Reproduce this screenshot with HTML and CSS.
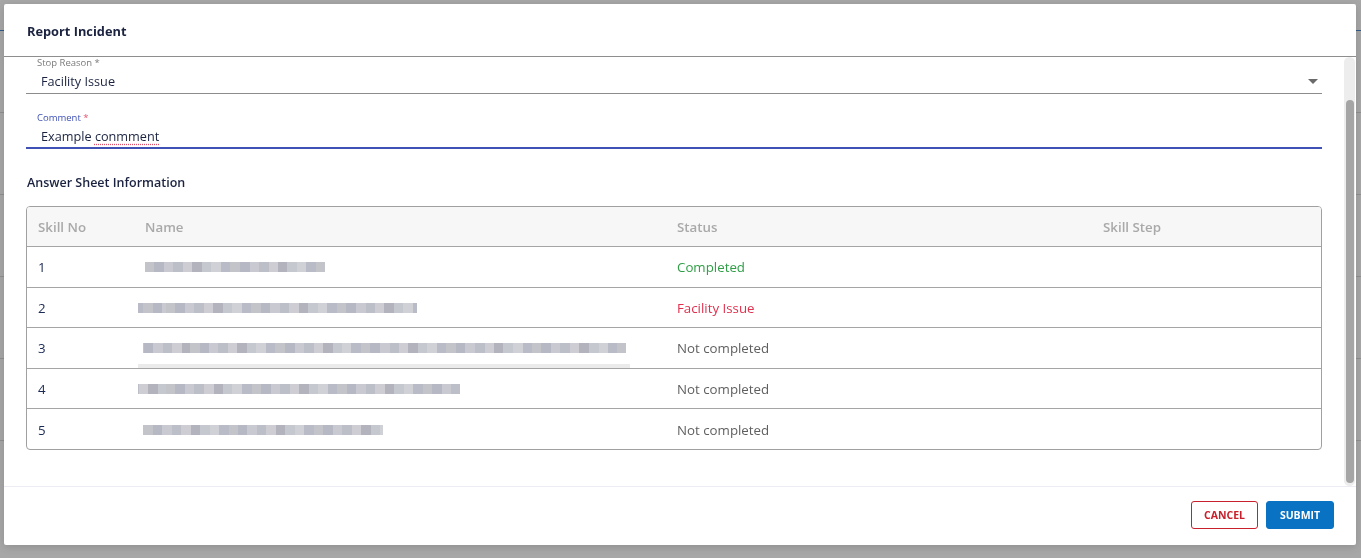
FILE: index.html
```html
<!DOCTYPE html>
<html lang="en">
<head>
    <meta charset="UTF-8">
    <meta name="viewport" content="width=device-width, initial-scale=1.0">
    <title>Report Incident</title>
    <link rel="stylesheet" href="styles.css">
</head>
<body>
    <!-- page behind the dialog -->
    <div class="page">
        <div class="page-bar"></div>
        <div class="page-row"></div>
        <div class="page-row"></div>
        <div class="page-row"></div>
        <div class="page-row"></div>
        <div class="page-row"></div>
    </div>

    <div class="backdrop">
        <div class="dialog">
            <div class="dialog-header">
                <h2>Report Incident</h2>
            </div>

            <div class="dialog-body">
                <div class="dialog-content">
                    <div class="field">
                        <label>Stop Reason *</label>
                        <div class="field-value">
                            <span>Facility Issue</span>
                            <span class="caret"></span>
                        </div>
                    </div>

                    <div class="field focused">
                        <label>Comment <span class="req">*</span></label>
                        <div class="field-value">
                            <span>Example <span class="misspelt">conmment</span></span>
                        </div>
                    </div>

                    <h3>Answer Sheet Information</h3>

                    <div class="sheet">
                        <div class="sheet-row sheet-head">
                            <div>Skill No</div>
                            <div>Name</div>
                            <div>Status</div>
                            <div>Skill Step</div>
                        </div>
                        <div class="sheet-row">
                            <div class="num">1</div>
                            <div><span class="hidden-name v1" style="width: 180px; margin-left: 0"></span></div>
                            <div class="status done">Completed</div>
                            <div></div>
                        </div>
                        <div class="sheet-row">
                            <div class="num">2</div>
                            <div><span class="hidden-name v2" style="width: 279px; margin-left: -7px"></span></div>
                            <div class="status issue">Facility Issue</div>
                            <div></div>
                        </div>
                        <div class="sheet-row">
                            <div class="num">3</div>
                            <div class="marked"><span class="hidden-name v3" style="width: 483px; margin-left: -2px"></span></div>
                            <div class="status">Not completed</div>
                            <div></div>
                        </div>
                        <div class="sheet-row">
                            <div class="num">4</div>
                            <div><span class="hidden-name v2" style="width: 322px; margin-left: -7px"></span></div>
                            <div class="status">Not completed</div>
                            <div></div>
                        </div>
                        <div class="sheet-row">
                            <div class="num">5</div>
                            <div><span class="hidden-name v1" style="width: 240px; margin-left: -2px"></span></div>
                            <div class="status">Not completed</div>
                            <div></div>
                        </div>
                    </div>
                </div>

                <div class="scroll-track">
                    <div class="scroll-thumb"></div>
                </div>
            </div>

            <div class="dialog-footer">
                <button class="btn btn-cancel">CANCEL</button>
                <button class="btn btn-submit">SUBMIT</button>
            </div>
        </div>
    </div>
</body>
</html>
```

FILE: styles.css
```css
* {
    box-sizing: border-box;
}
body {
    margin: 0;
    font-family: "Open Sans", "Noto Sans", Arial, sans-serif;
    color: #1b2340;
    background-color: #fff;
    height: 558px;
    overflow: hidden;
}

/* dimmed page underneath */
.page {
    height: 100%;
}
.page-bar {
    height: 31px;
    border-bottom: 1px solid #1565c0;
}
.page-row {
    height: 82px;
    border-bottom: 1px solid #d0d0d0;
}
.page-row:first-of-type {
    height: 81px;
}

.backdrop {
    position: fixed;
    inset: 0;
    background: rgba(80, 80, 80, 0.5);
    padding: 4px 5px 13px 4px;
}
.dialog {
    height: 100%;
    background: #fff;
    border-radius: 2px;
    display: flex;
    flex-direction: column;
    box-shadow: 0 2px 8px rgba(0, 0, 0, 0.15);
}

.dialog-header {
    height: 53px;
    padding: 0 23px;
    display: flex;
    align-items: center;
    border-bottom: 1px solid #8e8e8e;
    flex-shrink: 0;
}
.dialog-header h2 {
    margin: 0;
    font-size: 12.8px;
    font-weight: 700;
    color: #1b2340;
    padding-top: 2px;
}

.dialog-body {
    flex: 1;
    display: flex;
    min-height: 0;
}
.dialog-content {
    flex: 1;
    padding: 0 22px 0 22px;
}

.field {
    border-bottom: 1px solid #8c8c8c;
    padding-bottom: 2px;
}
.field label {
    display: block;
    height: 12px;
    line-height: 12px;
    font-size: 9.5px;
    color: #7a7a7a;
    padding-left: 11px;
}
.field-value {
    display: flex;
    align-items: center;
    justify-content: space-between;
    height: 20px;
    margin-top: 2px;
    padding-left: 15px;
    padding-right: 4px;
    font-size: 12.7px;
    color: #1b2340;
}
.caret {
    width: 0;
    height: 0;
    border-left: 5px solid transparent;
    border-right: 5px solid transparent;
    border-top: 5px solid #6a6a6a;
}
.field.focused {
    margin-top: 18px;
    border-bottom: 2px solid #3f51b5;
    padding-bottom: 1px;
}
.field.focused label {
    color: #3f51b5;
}
.req {
    color: #e5546e;
}
.misspelt {
    text-decoration: underline dotted #e0506a;
    text-underline-offset: 3px;
}

h3 {
    margin: 25px 0 0 1px;
    height: 18px;
    line-height: 18px;
    font-size: 12.5px;
    font-weight: 600;
    color: #1b2340;
}

/* answer sheet table */
.sheet {
    margin-top: 14px;
    border: 1px solid #a0a0a0;
    border-radius: 4px;
    overflow: hidden;
}
.sheet-row {
    display: grid;
    grid-template-columns: 106px 532px 426px 1fr;
    align-items: center;
    height: 40.6px;
    border-bottom: 1px solid #a5a5a5;
    font-size: 13.3px;
    padding-top: 1px;
}
.sheet-row:last-child {
    border-bottom: none;
    height: 39.6px;
}
.sheet-row > div {
    padding-left: 12px;
}
.sheet-row > div:first-child {
    padding-left: 11px;
}
.sheet-head {
    height: 40px;
    background: #f7f7f7;
    color: #a9a9a9;
    font-weight: 600;
    padding-top: 0;
}
.num {
    color: #1b2a55;
}
.status {
    color: #5f5f5f;
}
.status.done {
    color: #2e9e45;
}
.status.issue {
    color: #e0304e;
}

/* names are pixelated out */
.hidden-name {
    display: block;
    height: 10px;
    background: repeating-linear-gradient(90deg,
        #c3c3ca 0 9.5px, #b6b8c3 9.5px 19px, #c9cad1 19px 28.5px,
        #bcbec8 28.5px 38px, #cdcdd3 38px 47.5px, #b3b3bd 47.5px 57px,
        #c6c8cf 57px 66.5px, #d0d1d6 66.5px 76px, #b9bbc6 76px 85.5px);
}
.hidden-name.v2 {
    background-position: 28px 0;
}
.hidden-name.v3 {
    background-position: 47px 0;
}
.marked {
    position: relative;
    align-self: stretch;
    display: flex;
    align-items: center;
}
.marked::after {
    content: "";
    position: absolute;
    left: 5px;
    width: 492px;
    bottom: 0;
    height: 4px;
    background: #ebebeb;
}

.scroll-track {
    width: 11px;
    margin-right: 1px;
    background: #ededed;
    border-radius: 6px;
    padding: 43px 1px 3px 1.5px;
}
.scroll-thumb {
    height: 100%;
    background: #a5a5a5;
    border-radius: 5px;
}

.dialog-footer {
    height: 59px;
    flex-shrink: 0;
    border-top: 1px solid #ececf3;
    display: flex;
    align-items: center;
    justify-content: flex-end;
    gap: 8px;
    padding: 0 22px 3px 0;
}
.btn {
    height: 28px;
    padding: 0 10px;
    font-family: inherit;
    font-size: 10.5px;
    font-weight: 700;
    border-radius: 3px;
    cursor: pointer;
}
.btn-cancel {
    width: 67px;
    background: #fff;
    color: #c8202d;
    border: 1px solid #c8202d;
}
.btn-submit {
    width: 68px;
    background: #0a72c2;
    color: #fff;
    border: 1px solid #0a72c2;
}
```
